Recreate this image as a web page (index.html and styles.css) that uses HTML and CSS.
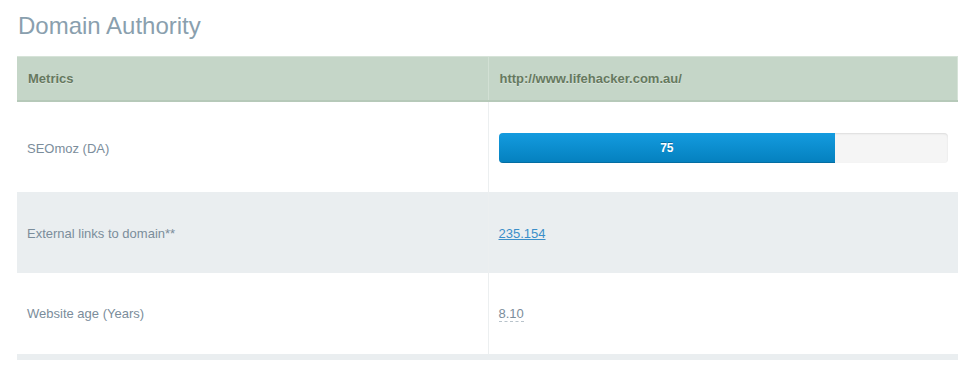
FILE: index.html
```html
<!DOCTYPE html>
<html lang="en">
<head>
  <meta charset="UTF-8">
  <title>Domain Authority</title>
  <link rel="stylesheet" href="styles.css">
</head>
<body>

  <div class="panel">
    <h2 class="panel-title">Domain Authority</h2>

    <table class="metrics">
      <colgroup>
        <col class="col-name">
        <col>
      </colgroup>
      <thead>
        <tr>
          <th>Metrics</th>
          <th>http://www.lifehacker.com.au/</th>
        </tr>
      </thead>
      <tbody>
        <tr>
          <td>SEOmoz (DA)</td>
          <td>
            <div class="progress">
              <div class="bar" style="width: 75%">75</div>
            </div>
          </td>
        </tr>
        <tr class="alt">
          <td>External links to domain**</td>
          <td><a href="#">235.154</a></td>
        </tr>
        <tr>
          <td>Website age (Years)</td>
          <td><abbr title="8 years, 10 months">8.10</abbr></td>
        </tr>
      </tbody>
      <tfoot>
        <tr><td colspan="2"></td></tr>
      </tfoot>
    </table>
  </div>

</body>
</html>
```

FILE: styles.css
```css
body {
  margin: 0;
  background: #fff;
  font-family: "Liberation Sans", Arial, sans-serif;
  color: #7b8d9b;
}
.panel {
  padding: 12px 11px 0 17px;
}
.panel-title {
  margin: 0 0 16px 1px;
  font-size: 24px;
  font-weight: normal;
  line-height: 28px;
  color: #8a9fae;
}
.metrics {
  width: 941px;
  border-collapse: collapse;
  table-layout: fixed;
  font-size: 13px;
}
.metrics .col-name {
  width: 471px;
}
.metrics th {
  background: #c5d6c8;
  border-top: 1px solid #d6e3d8;
  border-bottom: 2px solid #b6c9b9;
  padding: 12px 10px 13px 11px;
  height: 18px;
  text-align: left;
  font-size: 13px;
  font-weight: bold;
  color: #66795f;
  text-shadow: 0 1px 0 rgba(255, 255, 255, 0.35);
}
.metrics th + th {
  border-left: 1px solid #d2e0d4;
  border-right: 1px solid #d6e3d8;
}
.metrics td {
  padding: 30px 10px;
  line-height: 21px;
  vertical-align: middle;
}
.metrics td + td {
  border-left: 1px solid #eceff0;
}
.metrics tbody tr:first-child td {
  padding-top: 31px;
  padding-bottom: 29px;
}
.metrics tr.alt td {
  background: #eaeef0;
  padding-top: 31px;
  padding-bottom: 29px;
}
.metrics tfoot td {
  padding: 0;
  height: 6px;
  background: #eaeef0;
  line-height: 0;
}
.metrics a {
  color: #3b8fc9;
}
.metrics abbr {
  text-decoration: none;
  border-bottom: 1px dashed #b8c3cb;
  color: #7b8d9b;
}

/* progress bar */
.progress {
  height: 30px;
  background: #f5f5f5;
  border-radius: 4px;
  box-shadow: inset 0 1px 2px rgba(0, 0, 0, 0.1);
  overflow: hidden;
}
.progress .bar {
  height: 100%;
  background: linear-gradient(to bottom, #149bdf, #0480be);
  box-shadow: inset 0 -1px 0 rgba(0, 0, 0, 0.15);
  color: #fff;
  font-size: 12px;
  font-weight: bold;
  line-height: 30px;
  text-align: center;
  text-shadow: 0 -1px 0 rgba(0, 0, 0, 0.25);
}
```
